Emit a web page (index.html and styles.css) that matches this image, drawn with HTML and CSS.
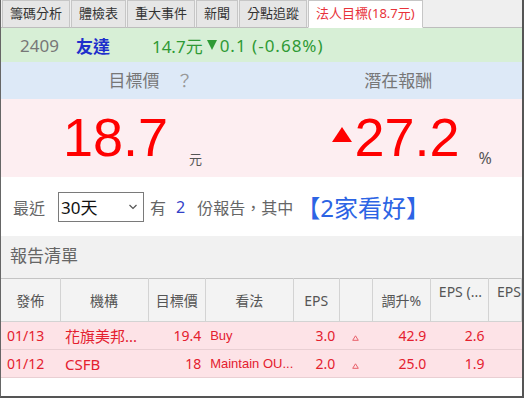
FILE: index.html
```
<!DOCTYPE html>
<html lang="zh-Hant">
  <head>
    <meta charset="utf-8" />
    <title>法人目標</title>
    <link rel="stylesheet" href="styles.css">
  </head>
  <body>
    <div class="panel">
      <div class="tabs">
        <span class="tab">籌碼分析</span>
        <span class="tab">體檢表</span>
        <span class="tab">重大事件</span>
        <span class="tab">新聞</span>
        <span class="tab">分點追蹤</span>
        <span class="tab active">法人目標(18.7元)</span>
      </div>

      <div class="quote">
        <span class="code">2409</span>
        <span class="name">友達</span>
        <span class="price">14.7元</span>
        <span class="down"></span>
        <span class="change">0.1 (-0.68%)</span>
      </div>

      <div class="summary-head">
        <div class="cell target">目標價 <span class="help">？</span></div>
        <div class="cell">潛在報酬</div>
      </div>
      <div class="summary-vals">
        <div class="cell target"><span class="num">18.7</span><span class="unit">元</span></div>
        <div class="cell upside"><span class="up"></span><span class="num">27.2</span><span class="unit pct">%</span></div>
      </div>

      <div class="filter">
        <span class="label">最近</span>
        <div class="select">
          <span>30天</span>
          <svg width="10" height="6" viewBox="0 0 10 6"><path d="M1.5 1 L5 4.5 L8.5 1" fill="none" stroke="#555" stroke-width="1.2"/></svg>
        </div>
        <span class="label">有</span>
        <span class="count">2</span>
        <span class="label">份報告，其中</span>
        <span class="bulls">【2家看好】</span>
      </div>

      <div class="list-title">報告清單</div>

      <table class="reports">
        <colgroup>
          <col style="width:59px"><col style="width:88px"><col style="width:57px"><col style="width:88px">
          <col style="width:46px"><col style="width:33px"><col style="width:58px"><col style="width:58px"><col style="width:33px">
        </colgroup>
        <thead>
          <tr>
            <th>發佈</th>
            <th>機構</th>
            <th>目標價</th>
            <th>看法</th>
            <th>EPS</th>
            <th></th>
            <th>調升%</th>
            <th class="top">EPS (...</th>
            <th class="top">EPS</th>
          </tr>
        </thead>
        <tbody>
          <tr>
            <td>01/13</td>
            <td class="org">花旗美邦...</td>
            <td class="r">19.4</td>
            <td class="view">Buy</td>
            <td class="r">3.0</td>
            <td class="c"><svg width="7" height="6" viewBox="0 0 7 6"><path d="M3.5 0.8 L6.3 5.3 L0.7 5.3 Z" fill="none" stroke="#e8606a" stroke-width="1"/></svg></td>
            <td class="r">42.9</td>
            <td class="r">2.6</td>
            <td></td>
          </tr>
          <tr>
            <td>01/12</td>
            <td class="org">CSFB</td>
            <td class="r">18</td>
            <td class="view">Maintain OU...</td>
            <td class="r">2.0</td>
            <td class="c"><svg width="7" height="6" viewBox="0 0 7 6"><path d="M3.5 0.8 L6.3 5.3 L0.7 5.3 Z" fill="none" stroke="#e8606a" stroke-width="1"/></svg></td>
            <td class="r">25.0</td>
            <td class="r">1.9</td>
            <td></td>
          </tr>
        </tbody>
      </table>
    </div>
  </body>
</html>
```

FILE: styles.css
```
html, body {
  margin: 0;
  background: #fff;
}
body {
  font-family: "Noto Sans", "Noto Sans CJK TC", sans-serif;
}
.panel {
  width: 524px;
  height: 398px;
  box-sizing: border-box;
  border-left: 1px solid #666;
  border-right: 2px solid #555;
  border-bottom: 2px solid #555;
  overflow: hidden;
}

/* tab bar */
.tabs {
  display: flex;
  align-items: flex-end;
  height: 28px;
  padding-left: 1px;
  background: #efefef;
  border-bottom: 1px solid #bdbdbd;
  box-sizing: border-box;
}
.tab {
  height: 26px;
  line-height: 25px;
  padding: 0 7px;
  margin-right: 1px;
  margin-bottom: -1px;
  font-size: 13px;
  color: #333;
  background: #e6e6e6;
  border: 1px solid #c6c6c6;
  border-bottom-color: #bdbdbd;
}
.tab.active {
  color: #e8333a;
  background: #fff;
  border-bottom-color: #fff;
}

/* quote line */
.quote {
  display: flex;
  align-items: center;
  height: 34px;
  padding-left: 19px;
  background: #d7efd6;
  font-size: 17px;
}
.code { color: #777; }
.name {
  margin-left: 17px;
  color: #1f2fcc;
  font-weight: bold;
}
.price {
  margin-left: 42px;
  color: #2f9a35;
}
.down {
  margin-left: 4px;
  margin-right: 3px;
  border-left: 5px solid transparent;
  border-right: 5px solid transparent;
  border-top: 10px solid #2f9a35;
}
.change {
  color: #2f9a35;
  letter-spacing: 1px;
}

/* target / upside */
.summary-head {
  display: flex;
  height: 37px;
  background: #dde9f7;
  font-size: 17px;
  color: #777;
}
.summary-head .cell {
  flex: 1;
  text-align: center;
  line-height: 37px;
}
.summary-head .target {
  padding-left: 26px;
}
.help {
  margin-left: 12px;
  color: #999;
}
.summary-vals {
  display: flex;
  height: 78px;
  background: #fdeef1;
  color: #ff0000;
}
.summary-vals .cell {
  flex: 1;
  box-sizing: border-box;
  padding-top: 11px;
  font-family: "Liberation Sans", Arial, sans-serif;
  font-size: 54px;
  line-height: 54px;
  white-space: nowrap;
}
.summary-vals .target { padding-left: 62px; }
.summary-vals .upside { padding-left: 78px; }
.unit {
  margin-left: 21px;
  font-family: "Noto Sans", "Noto Sans CJK TC", sans-serif;
  font-size: 13px;
  line-height: 1;
  color: #555;
  vertical-align: -8px;
}
.unit.pct {
  margin-left: 19px;
  font-size: 16px;
}
.up {
  display: inline-block;
  margin-right: 3px;
  border-left: 10.5px solid transparent;
  border-right: 10.5px solid transparent;
  border-bottom: 15px solid #ff0000;
  vertical-align: 14px;
}

/* filter line */
.filter {
  display: flex;
  align-items: center;
  height: 59px;
  padding-left: 12px;
  font-size: 16px;
  color: #666;
}
.select {
  display: flex;
  align-items: center;
  justify-content: space-between;
  width: 86px;
  height: 30px;
  box-sizing: border-box;
  margin: 0 6px 0 13px;
  padding: 0 5px 0 2px;
  border: 1px solid #7a7a7a;
  font-size: 17px;
  color: #111;
}
.count {
  margin: 0 12px 0 10px;
  color: #3341c8;
}
.bulls {
  margin-left: 3px;
  font-size: 24px;
  color: #2c64e4;
}

.list-title {
  height: 42px;
  line-height: 40px;
  padding-left: 9px;
  background: #f1f1f1;
  font-size: 17px;
  color: #666;
}

/* report table */
.reports {
  width: 521px;
  table-layout: fixed;
  border-collapse: collapse;
  font-size: 14px;
}
.reports th {
  height: 39px;
  padding: 0;
  font-weight: normal;
  color: #555;
  background: #f3f3f3;
  border: 1px solid #d3d3d3;
  border-top-color: #c4c4c4;
  white-space: nowrap;
  overflow: hidden;
}
.reports th:first-child { border-left: none; }
.reports th.top {
  vertical-align: top;
  padding-top: 3px;
  text-align: left;
  padding-left: 8px;
}
.reports td {
  height: 27px;
  padding: 0 4px 0 6px;
  color: #e4202e;
  background: #fde3e7;
  border-bottom: 1px solid #e9cfd3;
  white-space: nowrap;
  overflow: hidden;
}
.reports td.org {
  padding-left: 5px;
  font-size: 15px;
}
.reports td.view {
  padding-left: 5px;
  font-family: "Liberation Sans", Arial, sans-serif;
  font-size: 13px;
}
.reports td.r { text-align: right; }
.reports td.c { text-align: center; padding: 0; }
```
